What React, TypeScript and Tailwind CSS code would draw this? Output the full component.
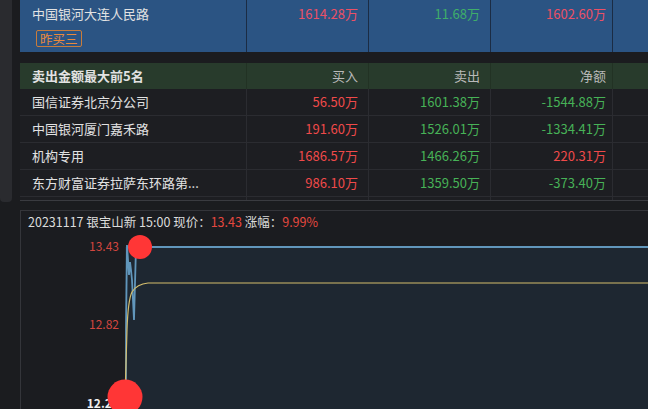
import React from "react";

const red = "text-[#f04a4a]";
const green = "text-[#47b257]";

type Row = { name: string; buy: string; sell: string; net: string; netUp: boolean };

const rows: Row[] = [
  { name: "国信证券北京分公司", buy: "56.50万", sell: "1601.38万", net: "-1544.88万", netUp: false },
  { name: "中国银河厦门嘉禾路", buy: "191.60万", sell: "1526.01万", net: "-1334.41万", netUp: false },
  { name: "机构专用", buy: "1686.57万", sell: "1466.26万", net: "220.31万", netUp: true },
  { name: "东方财富证券拉萨东环路第...", buy: "986.10万", sell: "1359.50万", net: "-373.40万", netUp: false },
];

const grid = "grid grid-cols-[227px_122px_122px_122px_1fr]";

const App = () => {
  return (
    <div
      className="w-[648px] h-[409px] overflow-hidden bg-[#1b1c1f] flex text-[13px] text-[#e2e2e2]"
      style={{ fontFamily: '"Noto Sans CJK SC", "Noto Sans", sans-serif' }}
    >
      {/* 外层滚动条 */}
      <div className="w-[12px] h-[202px] shrink-0 bg-[#2a2b2f] rounded-b-sm" />

      <div className="flex-1 flex flex-col pl-2 min-w-0">
        {/* 上一组最后一行（选中） */}
        <div className={`${grid} h-[52px] bg-[#2b5483] shrink-0`}>
          <div className="border-r border-[#1b2c44] pl-3 pt-[4px] flex flex-col items-start">
            <span className="leading-[20px]">中国银河大连人民路</span>
            <span className="mt-[6px] ml-[4px] border border-[#c87c3c] rounded-[2px] px-[3px] text-[12.5px] leading-[15px] text-[#e98a3c]">
              昨买三
            </span>
          </div>
          <div className="border-r border-[#1b2c44] pr-[10px] pt-[4px] text-right leading-[20px] text-[#ec5066]">1614.28万</div>
          <div className="border-r border-[#1b2c44] pr-[10px] pt-[4px] text-right leading-[20px] text-[#3fae6a]">11.68万</div>
          <div className="border-r border-[#1b2c44] pr-[6px] pt-[4px] text-right leading-[20px] text-[#ec5066]">1602.60万</div>
          <div />
        </div>

        <div className="h-[11px] shrink-0" />

        {/* 卖出金额最大前5名 */}
        <div className="shrink-0 border-b border-[#3a3b40]">
          <div className={`${grid} h-[26px] bg-[#283b2c] items-stretch`}>
            <div className="border-r border-[#223224] pl-3 font-bold leading-[26px]">卖出金额最大前5名</div>
            <div className="border-r border-[#223224] pr-[10px] text-right leading-[26px] text-[#b9b9b9]">买入</div>
            <div className="border-r border-[#223224] pr-[10px] text-right leading-[26px] text-[#b9b9b9]">卖出</div>
            <div className="border-r border-[#223224] pr-[6px] text-right leading-[26px] text-[#b9b9b9]">净额</div>
            <div />
          </div>
          {rows.map((r) => (
            <div key={r.name} className={`${grid} h-[27px] bg-[#1d1e22] border-b border-[#2b2c31]`}>
              <div className="border-r border-[#2b2c31] pl-3 leading-[26px] whitespace-nowrap">{r.name}</div>
              <div className={`border-r border-[#2b2c31] pr-[10px] text-right leading-[26px] ${red}`}>{r.buy}</div>
              <div className={`border-r border-[#2b2c31] pr-[10px] text-right leading-[26px] ${green}`}>{r.sell}</div>
              <div className={`border-r border-[#2b2c31] pr-[6px] text-right leading-[26px] ${r.netUp ? red : green}`}>
                {r.net}
              </div>
              <div />
            </div>
          ))}
          <div className={`${grid} h-[3px] bg-[#1d1e22]`}>
            <div className="border-r border-[#2b2c31]" />
            <div className="border-r border-[#2b2c31]" />
            <div className="border-r border-[#2b2c31]" />
            <div className="border-r border-[#2b2c31]" />
            <div />
          </div>
        </div>

        <div className="h-[9px] shrink-0" />

        {/* 分时图 */}
        <div className="flex-1 border-t border-l border-[#34353a] bg-[#1b1c20] flex flex-col min-h-0">
          <div className="h-[22px] leading-[22px] pl-[7px] text-[12.5px] text-[#dcdcdc] whitespace-pre shrink-0">
            20231117 银宝山新 15:00 现价：<span className="text-[#e5483f]">13.43</span> 涨幅：
            <span className="text-[#e5483f]">9.99%</span>
          </div>
          <svg width="628" height="176" viewBox="0 0 628 176" className="block shrink-0">
            <rect x="104" y="14" width="524" height="162" fill="#1e2731" />
            <path
              d="M105,167 L105,97 L106,12 L108,42 L109,29 L110,37 L111,47 L113,87 L115,14 L628,14"
              fill="none"
              stroke="#6196bb"
              strokeWidth="1.8"
            />
            <path
              d="M104,164 L106,97 Q107,67 111,59 Q116,51 127,50 L628,50"
              fill="none"
              stroke="#d4bd6c"
              strokeWidth="1.2"
            />
            <text x="98" y="17.5" textAnchor="end" fontSize="12" fill="#d2463f">13.43</text>
            <text x="98" y="95.5" textAnchor="end" fontSize="12" fill="#d2463f">12.82</text>
            <text x="98" y="174.5" textAnchor="end" fontSize="12" fontWeight="bold" fill="#f0f0f0">12.22</text>
            <circle cx="119" cy="14" r="12" fill="#ff3636" />
            <circle cx="104" cy="164" r="17.5" fill="#ff3636" />
          </svg>
        </div>
      </div>
    </div>
  );
};

export default App;
